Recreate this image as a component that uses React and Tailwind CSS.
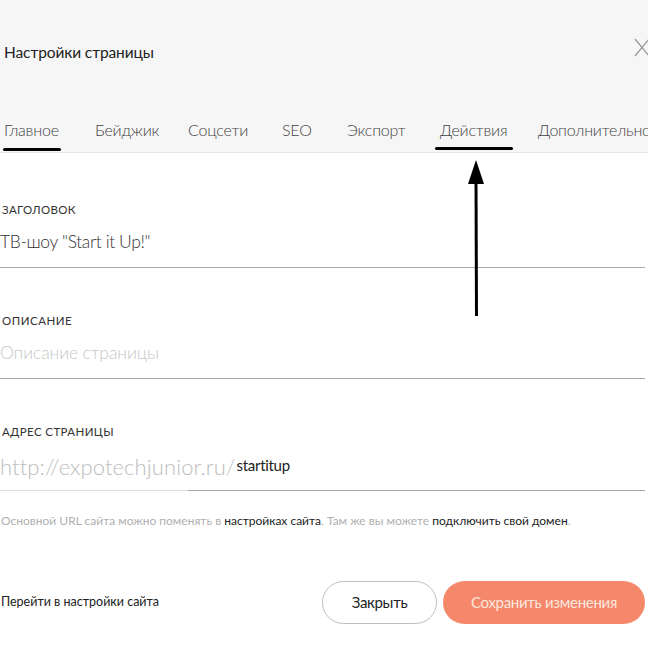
import React from "react";

const font = { fontFamily: 'Lato, "Noto Sans", "Liberation Sans", sans-serif' };

export default function App() {
  const tabs = [
    ["Главное", "w-[91px]"],
    ["Бейджик", "w-[93px]"],
    ["Соцсети", "w-[94px]"],
    ["SEO", "w-[65px]"],
    ["Экспорт", "w-[93px]"],
    ["Действия", "w-[98px]"],
    ["Дополнительно", "w-[120px]"],
  ];
  return (
    <div className="relative w-[648px] h-[648px] overflow-hidden bg-white text-[#222]" style={font}>
      {/* header */}
      <div className="h-[153px] bg-[#f6f6f6] border-b border-[#e6e6e6] flex flex-col">
        <div className="flex items-center justify-between h-[106px] pl-[4px]">
          <div className="text-[15.5px] tracking-[-0.1px] text-[#222]">Настройки страницы</div>
          <svg width="16" height="19" viewBox="0 0 16 19" className="mr-[-2px] mt-[-12px]">
            <path d="M1 1 L15 18 M15 1 L1 18" stroke="#9a9a9a" strokeWidth="1.3" fill="none" />
          </svg>
        </div>
        <div className="flex pl-[4px] pt-[13px] whitespace-nowrap">
          {tabs.map(([t, w], i) => (
            <div key={t} className={`flex flex-col shrink-0 ${w}`}>
              <div className="text-[16px] tracking-[-0.2px] text-[#444] leading-[22px] h-[29px] font-light">{t}</div>
              {i === 0 && <div className="h-[3px] bg-black w-[58px] ml-[-1px] rounded-sm"></div>}
            </div>
          ))}
        </div>
      </div>

      {/* body */}
      <div className="pr-[3px] flex flex-col">
        <div className="pt-[49px]">
          <div className="text-[11.5px] tracking-[0.3px] text-[#333] pl-[2px] leading-[16px]">ЗАГОЛОВОК</div>
          <div className="text-[17.5px] tracking-[-0.4px] text-[#333] pt-[12px] leading-[24px] font-light">ТВ-шоу "Start it Up!"</div>
          <div className="mt-[13px] h-px bg-[#a8a8a8]"></div>
        </div>
        <div className="pt-[45px]">
          <div className="text-[11.5px] tracking-[0.5px] text-[#333] pl-[2px] leading-[16px]">ОПИСАНИЕ</div>
          <div className="text-[17.5px] tracking-[-0.1px] text-[#c8c8c8] pt-[12px] leading-[24px] font-light">Описание страницы</div>
          <div className="mt-[13px] h-px bg-[#a8a8a8]"></div>
        </div>
        <div className="pt-[45px]">
          <div className="text-[11.5px] tracking-[0.4px] text-[#333] pl-[2px] leading-[16px]">АДРЕС СТРАНИЦЫ</div>
          <div className="flex items-end pt-[14px] h-[40px]">
            <span className="text-[22px] tracking-[0.1px] text-[#bdbdbd] leading-[26px] font-light">http://expotechjunior.ru/</span>
            <span className="text-[15px] tracking-[-0.3px] text-[#222] leading-[26px] ml-[1px] mb-[2px]">startitup</span>
          </div>
          <div className="mt-[10px] flex h-px">
            <div className="w-[188px] bg-[#dcdcdc]"></div>
            <div className="flex-1 bg-[#a8a8a8]"></div>
          </div>
        </div>
        <div className="pt-[23px] text-[12px] tracking-[0px] text-[#b0b0b0] pl-[1px] leading-[14px] whitespace-nowrap">
          Основной URL сайта можно поменять в <span className="text-[#222]">настройках сайта</span>. Там же вы можете <span className="text-[#222]">подключить свой домен</span>.
        </div>
        <div className="mt-[53px] flex items-center justify-between pl-[1px]">
          <div className="text-[12.5px] tracking-[0px] text-[#222]">Перейти в настройки сайта</div>
          <div className="flex gap-[6px]">
            <div className="w-[115px] h-[43px] rounded-full border border-[#bfbfbf] flex items-center justify-center text-[15px] tracking-[-0.3px] text-[#222]">Закрыть</div>
            <div className="w-[202px] h-[43px] rounded-full bg-[#f5876b] flex items-center justify-center text-[15px] tracking-[-0.3px] text-[#fde6dc]">Сохранить изменения</div>
          </div>
        </div>
      </div>

      {/* annotation */}
      <div className="absolute left-[435px] top-[147px] w-[78px] h-[3px] bg-black rounded-full"></div>
      <svg className="absolute left-[466px] top-[158px]" width="20" height="162" viewBox="0 0 20 162">
        <path d="M10 2 L18 26 L2 26 Z" fill="black" />
        <line x1="10" y1="22" x2="10.5" y2="158" stroke="black" strokeWidth="3" />
      </svg>
    </div>
  );
}
